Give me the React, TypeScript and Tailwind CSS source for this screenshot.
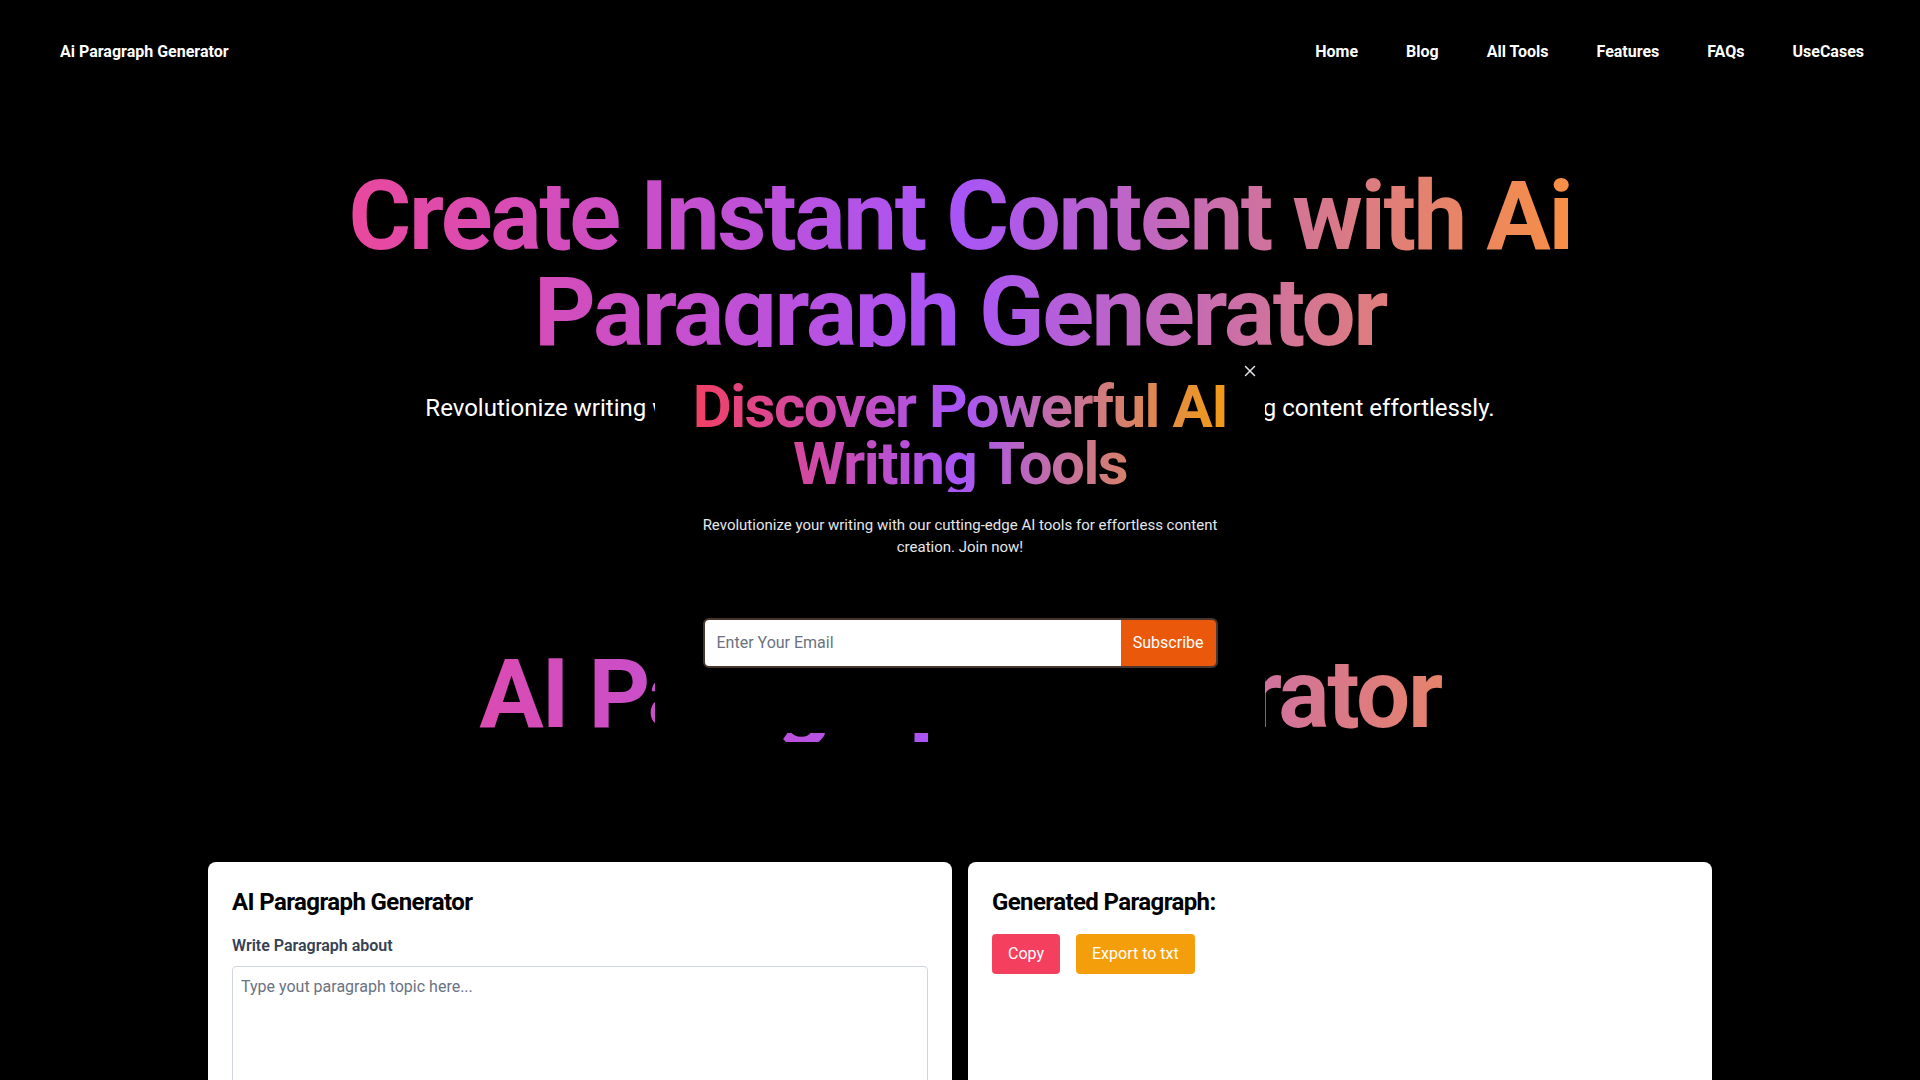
import { X } from "lucide-react";

const navLinks = ["Home", "Blog", "All Tools", "Features", "FAQs", "UseCases"];

const Navbar = () => {
  return (
    <nav className="flex h-[104px] items-center justify-between pl-[60px] pr-[56px]">
      <a href="#" className="text-base font-bold text-white">
        Ai Paragraph Generator
      </a>
      <ul className="flex items-center gap-12">
        {navLinks.map((link) => (
          <li key={link}>
            <a href="#" className="text-base font-bold text-white">
              {link}
            </a>
          </li>
        ))}
      </ul>
    </nav>
  );
};

const Hero = () => {
  return (
    <section className="flex flex-col items-center pt-[64px]">
      <h1 className="mx-auto w-full max-w-7xl bg-[linear-gradient(to_right,#ec4899,#a855f7,#fb923c)] bg-clip-text text-center text-8xl font-bold tracking-tight text-transparent">
        Create Instant Content with Ai Paragraph Generator
      </h1>
      <p className="mt-8 text-center text-2xl text-white">
        Revolutionize writing with our smart AI Paragraph Generator – crafting engaging content effortlessly.
      </p>
      <h2 className="mx-auto mt-[222px] w-full max-w-7xl bg-[linear-gradient(to_right,#ec4899,#a855f7,#fb923c)] bg-clip-text text-center text-8xl font-bold tracking-tight text-transparent">
        AI Paragraph Generator
      </h2>
    </section>
  );
};

const SubscribeModal = () => {
  return (
    <div className="fixed inset-0 z-50 flex items-center justify-center">
      <div className="relative w-[610px] bg-black px-7 pb-[65px] pt-[31px] text-center">
        <button className="absolute right-[3px] top-[12px] flex h-6 w-6 items-center justify-center text-gray-200">
          <X size={18} strokeWidth={2} />
        </button>
        <h2 className="bg-[linear-gradient(to_right,#f43f5e,#a855f7,#f59e0b)] bg-clip-text text-6xl leading-[57px] font-bold tracking-tight text-transparent">
          Discover Powerful AI Writing Tools
        </h2>
        <p className="mt-[22px] text-[15px] leading-[22px] text-gray-200">
          Revolutionize your writing with our cutting-edge AI tools for effortless content creation. Join now!
        </p>
        <form className="mx-auto mt-[60px] flex h-[50px] w-[515px] overflow-hidden rounded-md border-2 border-[#47362d]">
          <input
            type="email"
            placeholder="Enter Your Email"
            className="min-w-0 flex-1 bg-white px-3 text-base text-gray-800 outline-none placeholder:text-gray-500"
          />
          <button type="button" className="bg-[#ea580c] px-3 text-base text-white">
            Subscribe
          </button>
        </form>
      </div>
    </div>
  );
};

const Generator = () => {
  return (
    <section className="mx-auto mt-[120px] grid max-w-[1536px] grid-cols-2 gap-4 px-4 pb-16">
      <div className="rounded-lg bg-white p-6">
        <h2 className="mb-4 text-2xl font-bold tracking-tight text-black">AI Paragraph Generator</h2>
        <label className="mb-2 block text-base font-semibold text-gray-700">
          Write Paragraph about
        </label>
        <textarea
          placeholder="Type yout paragraph topic here..."
          className="h-[220px] w-full resize-none rounded border border-gray-300 p-2 text-base text-gray-800 outline-none placeholder:text-gray-500"
        />
      </div>
      <div className="rounded-lg bg-white p-6">
        <h2 className="mb-4 text-2xl font-bold tracking-tight text-black">Generated Paragraph:</h2>
        <div className="flex items-center gap-4">
          <button className="rounded bg-[#f43f5e] px-4 py-2 text-base text-white">Copy</button>
          <button className="rounded bg-[#f59e0b] px-4 py-2 text-base text-white">Export to txt</button>
        </div>
      </div>
    </section>
  );
};

export default function App() {
  return (
    <div className="min-h-screen bg-black font-[Roboto,sans-serif]">
      <Navbar />
      <Hero />
      <Generator />
      <SubscribeModal />
    </div>
  );
}
